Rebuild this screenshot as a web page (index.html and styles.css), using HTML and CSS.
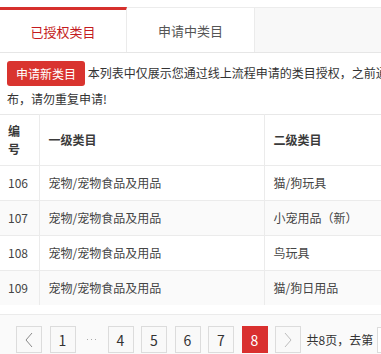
FILE: index.html
```html
<!DOCTYPE html>
<html lang="zh-CN">
<head>
<meta charset="utf-8">
<title>类目授权</title>
<link rel="stylesheet" href="styles.css">
</head>
<body>
<div class="page">
  <div class="tabs">
    <div class="tab active">已授权类目</div>
    <div class="tab">申请中类目</div>
  </div>
  <div class="notice">
    <span class="btn-apply">申请新类目</span> 本列表中仅展示您通过线上流程申请的类目授权，之前通过其他方式获得的类目授权不在此展示，您仍可正常发布，请勿重复申请!
  </div>
  <table class="grid">
    <colgroup>
      <col class="c1">
      <col class="c2">
      <col>
    </colgroup>
    <thead>
      <tr><th>编号</th><th>一级类目</th><th>二级类目</th></tr>
    </thead>
    <tbody>
      <tr><td>106</td><td>宠物/宠物食品及用品</td><td>猫/狗玩具</td></tr>
      <tr class="alt"><td>107</td><td>宠物/宠物食品及用品</td><td>小宠用品（新）</td></tr>
      <tr><td>108</td><td>宠物/宠物食品及用品</td><td>鸟玩具</td></tr>
      <tr class="alt"><td>109</td><td>宠物/宠物食品及用品</td><td>猫/狗日用品</td></tr>
    </tbody>
  </table>
  <div class="pager">
    <span class="pg arrow"><svg width="10" height="16" viewBox="0 0 10 16"><polyline points="8,1 2,8 8,15" fill="none" stroke="#8a8a8a" stroke-width="1"/></svg></span>
    <span class="pg">1</span>
    <span class="dots"><i></i><i></i><i></i></span>
    <span class="pg">4</span>
    <span class="pg">5</span>
    <span class="pg">6</span>
    <span class="pg">7</span>
    <span class="pg current">8</span>
    <span class="pg arrow"><svg width="10" height="16" viewBox="0 0 10 16"><polyline points="2,1 8,8 2,15" fill="none" stroke="#bdbdbd" stroke-width="1"/></svg></span>
    <span class="total">共8页，去第</span>
    <span class="goto"></span>
  </div>
</div>
</body>
</html>
```
FILE: styles.css
```css
html, body {
  margin: 0;
  padding: 0;
  overflow: hidden;
  background: #fff;
}
body {
  font-family: "Noto Sans CJK SC", "Noto Sans", sans-serif;
  font-size: 12px;
  color: #333;
}
.page {
  width: 700px;
}
.tabs {
  display: flex;
  margin-top: 7px;
  border-top: 1px solid #ececec;
  border-bottom: 1px solid #e6e6e6;
  background: #f8f8f8;
}
.tab {
  box-sizing: border-box;
  height: 44px;
  background: #fff;
  border-right: 1px solid #ebebeb;
  color: #555;
  font-size: 13px;
  display: flex;
  align-items: center;
  justify-content: center;
}
.tab:first-child { width: 127px; }
.tab:nth-child(2) { width: 128px; }
.tab.active {
  border-top: 3px solid #d6302d;
  color: #c41a20;
  margin-top: -1px;
  height: 45px;
}
.notice {
  padding: 7px 7px 3px;
  line-height: 25px;
}
.btn-apply {
  display: inline-block;
  vertical-align: middle;
  height: 25px;
  line-height: 25px;
  padding: 0 9px;
  margin-top: -2px;
  background: #d9342f;
  color: #fff;
  border-radius: 3px;
}
.grid {
  width: 700px;
  table-layout: fixed;
  border-collapse: collapse;
  border-top: 1px solid #e8e8e8;
}
.grid col.c1 { width: 39px; }
.grid col.c2 { width: 225px; }
.grid th, .grid td {
  text-align: left;
  padding: 8px;
  line-height: 18px;
  border-bottom: 1px solid #ebebeb;
  border-left: 1px solid #ebebeb;
}
.grid th:first-child, .grid td:first-child {
  border-left: none;
}
.grid th {
  padding-top: 7px;
  padding-bottom: 7px;
  font-weight: 700;
  color: #3a3a3a;
}
.grid td {
  color: #444;
}
.grid td:nth-child(n+2), .grid th:nth-child(n+2) {
  padding-left: 9px;
}
.grid tr.alt td {
  background: #fafafa;
}
.grid tbody tr:last-child td {
  border-bottom: none;
}
.pager {
  margin-top: 9px;
  border-top: 1px solid #ebebeb;
  background: #fafafa;
  padding: 11px 0 10px 16px;
  display: flex;
  align-items: center;
  gap: 7.5px;
}
.pg {
  box-sizing: border-box;
  width: 26px;
  height: 27px;
  border: 1px solid #dcdcdc;
  background: #f9f9f9;
  display: flex;
  align-items: center;
  justify-content: center;
  font-size: 14px;
  color: #333;
}
.pg.current {
  background: #d9302f;
  border-color: #d9302f;
  color: #fff;
}
.dots {
  width: 17px;
  display: flex;
  justify-content: center;
  gap: 3px;
}
.dots i {
  width: 1px;
  height: 1px;
  background: #aaa;
}
.total {
  font-size: 12px;
  color: #333;
  margin-left: -2px;
  white-space: nowrap;
}
.goto {
  box-sizing: border-box;
  width: 30px;
  height: 26px;
  border: 1px solid #dcdcdc;
  background: #fff;
  margin-left: -4px;
}
```
